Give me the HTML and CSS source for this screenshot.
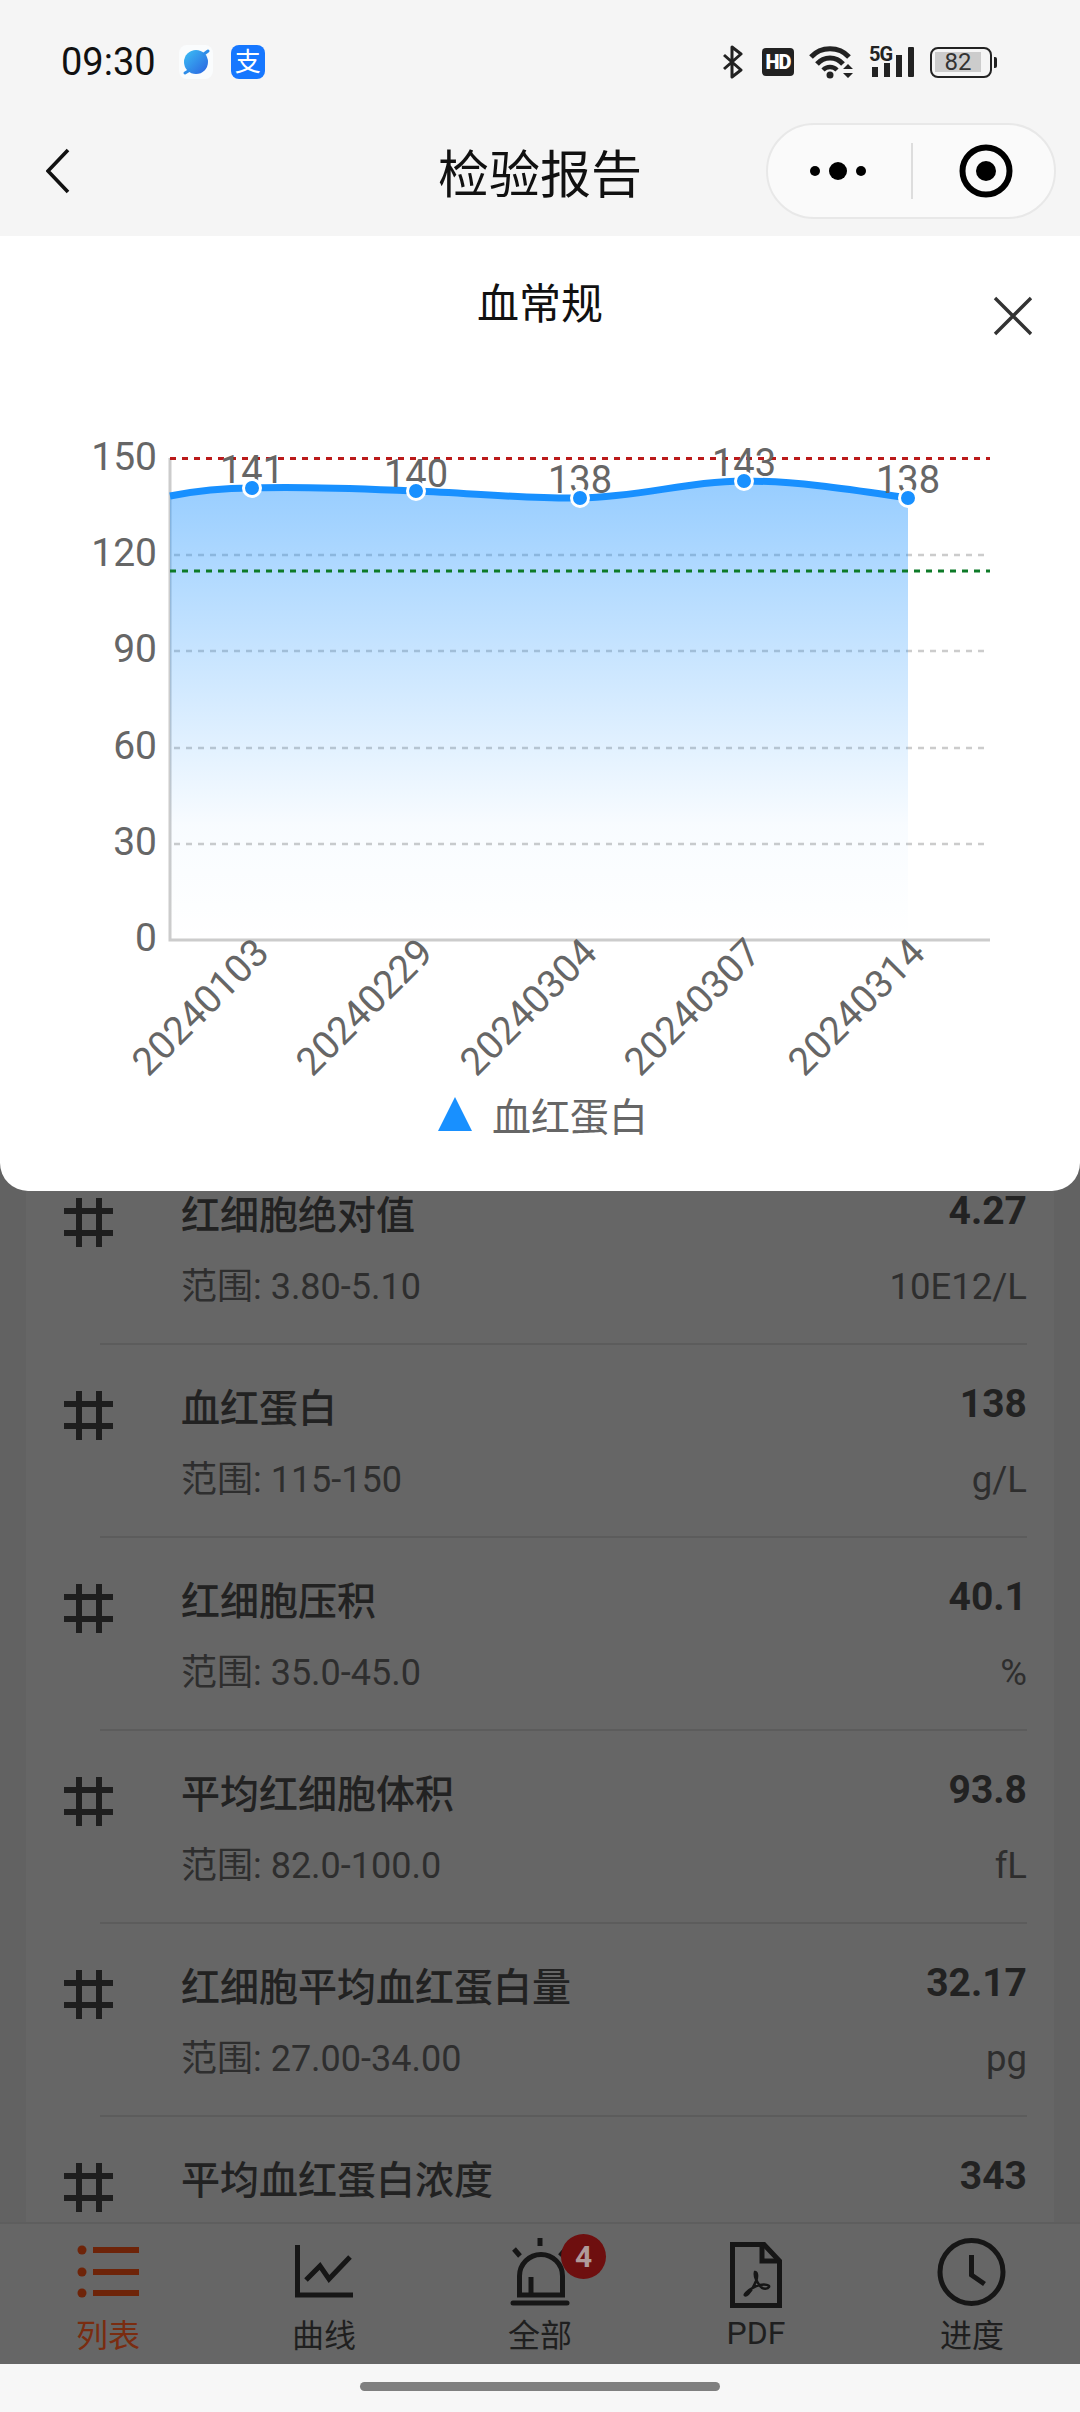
FILE: index.html
```html
<!DOCTYPE html>
<html lang="zh-Hans">
<head>
  <meta charset="UTF-8">
  <title>检验报告</title>
  <meta name="viewport" content="width=device-width, initial-scale=1.0">
  <link rel="stylesheet" href="styles.css">
</head>
<body>
  <div class="page">
    <header class="top">
      <div class="status">
        <span class="time">09:30</span>
        <svg class="app-icon planet" viewBox="0 0 34 34">
          <defs>
            <linearGradient id="ball" x1="0" y1="0" x2="1" y2="1">
              <stop offset="0" stop-color="#3cc0f5"/>
              <stop offset="1" stop-color="#2a62e0"/>
            </linearGradient>
          </defs>
          <circle cx="17" cy="17" r="12" fill="url(#ball)"/>
          <path d="M6 28l5-3 M25 9l4-3" stroke="#2f8de8" stroke-width="3" stroke-linecap="round"/>
        </svg>
        <span class="app-icon alipay">支</span>
        <div class="status-right">
          <svg class="s-bt" viewBox="0 0 25 34">
            <path d="M2 10l17 15-9 7V2l9 7L2 24" fill="none" stroke="#222" stroke-width="3" stroke-linejoin="round"/>
          </svg>
          <span class="s-hd">HD</span>
          <svg class="s-wifi" viewBox="0 0 45 34">
            <path d="M2 12C12 1 30 1 40 12" fill="none" stroke="#222" stroke-width="5"/>
            <path d="M8 19C15 11 27 11 34 19" fill="none" stroke="#222" stroke-width="5"/>
            <path d="M14 25C18 21 24 21 28 25" fill="none" stroke="#222" stroke-width="4.5"/>
            <circle cx="21" cy="30" r="3.5" fill="#222"/>
            <path d="M39 19l5 5H34z M34 28h10l-5 5z" fill="#222"/>
          </svg>
          <svg class="s-signal" viewBox="0 0 46 34">
            <text x="0" y="16" class="s-5g">5G</text>
            <rect x="3" y="22" width="6" height="10" fill="#222"/>
            <rect x="15" y="18" width="6" height="14" fill="#222"/>
            <rect x="27" y="10" width="6" height="22" fill="#222"/>
            <rect x="39" y="2" width="6" height="30" rx="1" fill="#222"/>
          </svg>
          <div class="s-batt">
            <div class="batt-box"><span class="batt-level">82</span></div>
            <span class="batt-nub"></span>
          </div>
        </div>
      </div>
      <nav class="nav">
        <svg class="back" viewBox="0 0 24 46">
          <path d="M22 2L2 23l20 21" fill="none" stroke="#111" stroke-width="3.6"/>
        </svg>
        <h1 class="nav-title">检验报告</h1>
        <div class="capsule">
          <svg class="cap-dots" viewBox="0 0 56 20">
            <circle cx="5" cy="10" r="5" fill="#000"/>
            <circle cx="28" cy="10" r="9" fill="#000"/>
            <circle cx="51" cy="10" r="5" fill="#000"/>
          </svg>
          <span class="cap-line"></span>
          <svg class="cap-target" viewBox="0 0 54 54">
            <circle cx="27" cy="27" r="23.5" fill="none" stroke="#000" stroke-width="6"/>
            <circle cx="27" cy="27" r="10" fill="#000"/>
          </svg>
        </div>
      </nav>
    </header>

    <main class="content">
      <ul class="list">
        <li class="row">
          <svg class="hash" viewBox="0 0 49 49"><path d="M15 0v49M35 0v49M0 13h49M0 35h49"/></svg>
          <div class="row-left"><div class="row-name">红细胞绝对值</div><div class="row-range">范围: 3.80-5.10</div></div>
          <div class="row-right"><div class="row-val">4.27</div><div class="row-unit">10E12/L</div></div>
        </li>
        <li class="row">
          <svg class="hash" viewBox="0 0 49 49"><path d="M15 0v49M35 0v49M0 13h49M0 35h49"/></svg>
          <div class="row-left"><div class="row-name">血红蛋白</div><div class="row-range">范围: 115-150</div></div>
          <div class="row-right"><div class="row-val">138</div><div class="row-unit">g/L</div></div>
        </li>
        <li class="row">
          <svg class="hash" viewBox="0 0 49 49"><path d="M15 0v49M35 0v49M0 13h49M0 35h49"/></svg>
          <div class="row-left"><div class="row-name">红细胞压积</div><div class="row-range">范围: 35.0-45.0</div></div>
          <div class="row-right"><div class="row-val">40.1</div><div class="row-unit">%</div></div>
        </li>
        <li class="row">
          <svg class="hash" viewBox="0 0 49 49"><path d="M15 0v49M35 0v49M0 13h49M0 35h49"/></svg>
          <div class="row-left"><div class="row-name">平均红细胞体积</div><div class="row-range">范围: 82.0-100.0</div></div>
          <div class="row-right"><div class="row-val">93.8</div><div class="row-unit">fL</div></div>
        </li>
        <li class="row">
          <svg class="hash" viewBox="0 0 49 49"><path d="M15 0v49M35 0v49M0 13h49M0 35h49"/></svg>
          <div class="row-left"><div class="row-name">红细胞平均血红蛋白量</div><div class="row-range">范围: 27.00-34.00</div></div>
          <div class="row-right"><div class="row-val">32.17</div><div class="row-unit">pg</div></div>
        </li>
        <li class="row">
          <svg class="hash" viewBox="0 0 49 49"><path d="M15 0v49M35 0v49M0 13h49M0 35h49"/></svg>
          <div class="row-left"><div class="row-name">平均血红蛋白浓度</div></div>
          <div class="row-right"><div class="row-val">343</div></div>
        </li>
      </ul>
    </main>

    <footer class="tabs">
      <div class="tab active">
        <svg class="tab-icon" viewBox="0 0 72 72">
          <g fill="#6e2409">
            <circle cx="10" cy="14" r="4.5"/><circle cx="10" cy="36" r="4.5"/><circle cx="10" cy="57" r="4.5"/>
            <rect x="21" y="11" width="46" height="6"/><rect x="21" y="33" width="46" height="6"/><rect x="21" y="54" width="46" height="6"/>
          </g>
        </svg>
        <span class="tab-text">列表</span>
      </div>
      <div class="tab">
        <svg class="tab-icon" viewBox="0 0 72 72">
          <path class="ico" d="M9.5 9v50H65"/>
          <path class="ico" d="M18 44l14-14 9 13 21-22"/>
        </svg>
        <span class="tab-text">曲线</span>
      </div>
      <div class="tab">
        <svg class="tab-icon" viewBox="0 0 72 72">
          <path class="ico" d="M15.5 59V40a21.5 21.5 0 0 1 43 0v19z"/>
          <path class="ico" d="M27 59V41"/>
          <path class="ico ico-round" d="M9 67h54"/>
          <path class="ico" d="M36 2v8M10 13l6 7M62 13l-6 7"/>
        </svg>
        <span class="tab-text">全部</span>
        <span class="badge">4</span>
      </div>
      <div class="tab">
        <svg class="tab-icon" viewBox="0 0 72 72">
          <path class="ico" d="M12.5 8.5H44L59.5 25v44.5H12.5z"/>
          <path class="ico" d="M42 8.5V25h17.5"/>
          <path class="ico-thin" d="M35 36c-1 4 2 10 5 14s8 3 9 1-4-3-9-2-11 5-14 8 0 3 2 1 6-8 8-13 1-9-1-9z"/>
        </svg>
        <span class="tab-text tab-latin">PDF</span>
      </div>
      <div class="tab">
        <svg class="tab-icon" viewBox="0 0 72 72">
          <circle class="ico" cx="35.5" cy="36" r="31.5"/>
          <path class="ico" d="M35.5 19v20l13 9"/>
        </svg>
        <span class="tab-text">进度</span>
      </div>
    </footer>

    <div class="home"><span class="home-bar"></span></div>

    <!-- 弹窗盖在列表上面 -->
    <section class="modal">
      <h2 class="modal-title">血常规</h2>
      <svg class="modal-close" viewBox="0 0 40 40">
        <path d="M2 2l36 36M38 2L2 38" stroke="#333" stroke-width="3.4" fill="none"/>
      </svg>
      <svg class="chart" viewBox="0 236 1080 955">
        <defs>
          <linearGradient id="area" x1="0" y1="0" x2="0" y2="1">
            <stop offset="0" stop-color="#1890ff" stop-opacity="0.45"/>
            <stop offset="0.75" stop-color="#1890ff" stop-opacity="0.03"/>
            <stop offset="1" stop-color="#1890ff" stop-opacity="0"/>
          </linearGradient>
        </defs>
        <g class="grid">
          <path d="M174 555H984M174 651H984M174 748H984M174 844H984"/>
        </g>
        <path class="axis" d="M170 458V940H990"/>
        <path d="M170 496C195 491 225 488 252 488C305 486 365 489 416 491C470 493 530 499 580 498C640 497 690 481 744 481C800 481 860 491 908 498V940H170Z" fill="url(#area)"/>
        <path class="limit limit-high" d="M170 458.5H990"/>
        <path class="limit limit-low" d="M170 571H990"/>
        <path class="curve" d="M170 496C195 491 225 488 252 488C305 486 365 489 416 491C470 493 530 499 580 498C640 497 690 481 744 481C800 481 860 491 908 498"/>

        <g class="y-labels">
          <text x="157" y="470">150</text>
          <text x="157" y="566">120</text>
          <text x="157" y="662">90</text>
          <text x="157" y="759">60</text>
          <text x="157" y="855">30</text>
          <text x="157" y="951">0</text>
        </g>

        <g class="values">
          <text x="252" y="483">141</text>
          <text x="416" y="487">140</text>
          <text x="580" y="493">138</text>
          <text x="744" y="476">143</text>
          <text x="908" y="493">138</text>
        </g>

        <g class="dots">
          <circle cx="252" cy="488" r="8.5"/>
          <circle cx="416" cy="491" r="8.5"/>
          <circle cx="580" cy="498" r="8.5"/>
          <circle cx="744" cy="481" r="8.5"/>
          <circle cx="908" cy="498" r="8.5"/>
        </g>

        <g class="x-labels">
          <text transform="translate(271 955) rotate(-45)">20240103</text>
          <text transform="translate(435 955) rotate(-45)">20240229</text>
          <text transform="translate(599 955) rotate(-45)">20240304</text>
          <text transform="translate(763 955) rotate(-45)">20240307</text>
          <text transform="translate(927 955) rotate(-45)">20240314</text>
        </g>

        <path d="M455 1097L472 1131H438Z" fill="#1890ff"/>
        <text class="legend" x="492" y="1131">血红蛋白</text>
      </svg>
    </section>
  </div>
</body>
</html>
```

FILE: styles.css
```css
* {
  box-sizing: border-box;
}

html, body {
  margin: 0;
  padding: 0;
}

body {
  font-family: Roboto, "Noto Sans CJK SC", sans-serif;
  background: #f7f7f7;
  color: #222;
}

.page {
  position: relative;
  width: 1080px;
  height: 2412px;
  display: flex;
  flex-direction: column;
  overflow: hidden;
}

/* status bar + nav */
.top {
  height: 236px;
  flex: none;
  background: #f5f5f5;
}

.status {
  height: 108px;
  padding: 16px 83px 0 61px;
  display: flex;
  align-items: center;
}

.time {
  font-size: 38px;
  color: #111;
  margin-right: 23px;
}

.app-icon {
  width: 34px;
  height: 34px;
  border-radius: 8px;
  flex: none;
}

.planet {
  background: #fafcfd;
  margin-right: 18px;
}

.alipay {
  background: #1677ff;
  color: #fff;
  font-size: 26px;
  line-height: 34px;
  text-align: center;
}

.status-right {
  margin-left: auto;
  display: flex;
  align-items: center;
  gap: 15px;
}

.s-bt {
  width: 25px;
  height: 34px;
}

.s-hd {
  width: 32px;
  height: 28px;
  border-radius: 4px;
  background: #222;
  color: #fff;
  font-size: 20px;
  font-weight: 900;
  line-height: 28px;
  text-align: center;
  letter-spacing: -1px;
}

.s-wifi {
  width: 45px;
  height: 34px;
}

.s-signal {
  width: 46px;
  height: 34px;
  overflow: visible;
}

.s-5g {
  font-size: 20px;
  font-weight: 700;
  fill: #222;
  letter-spacing: -1px;
}

.s-batt {
  display: flex;
  align-items: center;
  gap: 2px;
}

.batt-box {
  width: 62px;
  height: 31px;
  border: 2.5px solid #222;
  border-radius: 8px;
  padding: 3px;
}

.batt-level {
  display: block;
  width: 46px;
  height: 20px;
  background: #ccc;
  color: #333;
  font-size: 24px;
  line-height: 20px;
  text-align: center;
}

.batt-nub {
  width: 3px;
  height: 11px;
  background: #222;
  border-radius: 0 2px 2px 0;
}

.nav {
  height: 128px;
  position: relative;
  display: flex;
  align-items: center;
  justify-content: space-between;
  padding: 0 24px 2px 46px;
}

.back {
  width: 24px;
  height: 46px;
}

.nav-title {
  position: absolute;
  left: 0;
  right: 0;
  margin: 0;
  text-align: center;
  font-size: 51px;
  font-weight: 400;
  color: #111;
}

.capsule {
  width: 290px;
  height: 96px;
  border: 2px solid #e8e8e8;
  border-radius: 48px;
  background: #fafafa;
  display: flex;
  align-items: center;
  padding-left: 42px;
}

.cap-dots {
  width: 56px;
  height: 20px;
}

.cap-line {
  width: 2px;
  height: 56px;
  background: #ddd;
  margin-left: 45px;
}

.cap-target {
  width: 54px;
  height: 54px;
  margin-left: 46px;
}

/* list behind the dim */
.content {
  flex: 1;
  min-height: 0;
  overflow: hidden;
  background: #626262;
  padding: 0 26px;
}

.list {
  list-style: none;
  margin: 0;
  padding: 916px 0 0;
  background: #666;
}

.row {
  height: 193px;
  margin: 0 27px 0 74px;
  border-bottom: 2px solid #5c5c5c;
  display: flex;
  padding-top: 41px;
}

.hash {
  width: 49px;
  height: 49px;
  margin: 5px 0 0 -36px;
  flex: none;
}

.hash path {
  fill: none;
  stroke: #1e1e1e;
  stroke-width: 6;
}

.row-left {
  margin-left: 68px;
  flex: 1;
}

.row-name {
  font-size: 39px;
  line-height: 46px;
  color: #222;
  font-weight: 500;
}

.row-range {
  font-size: 36px;
  line-height: 46px;
  margin-top: 25px;
  color: #2e2e2e;
}

.row-right {
  text-align: right;
}

.row-val {
  font-size: 39px;
  line-height: 46px;
  margin-top: -5px;
  font-weight: 700;
  color: #222;
}

.row-unit {
  font-size: 36.5px;
  line-height: 46px;
  margin-top: 30px;
  color: #2e2e2e;
}

/* bottom tabs */
.tabs {
  height: 142px;
  flex: none;
  background: #666;
  border-top: 2px solid #5e5e5e;
  display: grid;
  grid-template-columns: repeat(5, 1fr);
}

.tab {
  position: relative;
  display: flex;
  flex-direction: column;
  align-items: center;
  padding-top: 12px;
}

.tab-icon {
  width: 72px;
  height: 72px;
  flex: none;
}

.ico {
  fill: none;
  stroke: #161616;
  stroke-width: 5;
}

.ico-round {
  stroke-linecap: round;
}

.ico-thin {
  fill: none;
  stroke: #161616;
  stroke-width: 2.5;
}

.tab-text {
  font-size: 32px;
  line-height: 40px;
  margin-top: 8px;
  color: #1f1f1f;
}

.tab-latin {
  margin-top: 5px;
}

.tab.active .tab-text {
  color: #7a2c10;
}

.badge {
  position: absolute;
  left: 129px;
  top: 10px;
  width: 45px;
  height: 45px;
  border-radius: 50%;
  background: #6e0f0f;
  color: #b09a9a;
  font-size: 30px;
  font-weight: 700;
  line-height: 45px;
  text-align: center;
}

.home {
  height: 48px;
  flex: none;
  background: #f7f7f7;
  display: flex;
  justify-content: center;
  padding-top: 18px;
}

.home-bar {
  width: 360px;
  height: 9px;
  border-radius: 5px;
  background: #7f7f7f;
}

/* chart popup */
.modal {
  position: absolute;
  left: 0;
  top: 236px;
  width: 1080px;
  height: 955px;
  background: #fff;
  border-radius: 0 0 28px 28px;
}

.modal-title {
  margin: 0;
  padding-top: 42px;
  text-align: center;
  font-size: 42px;
  line-height: 54px;
  font-weight: 400;
  color: #111;
}

.modal-close {
  position: absolute;
  left: 993px;
  top: 60px;
  width: 40px;
  height: 40px;
}

.chart {
  position: absolute;
  left: 0;
  top: 0;
  width: 1080px;
  height: 955px;
}

.grid path {
  fill: none;
  stroke: #ccc;
  stroke-width: 2.5;
  stroke-dasharray: 6 6;
}

.axis {
  fill: none;
  stroke: #ccc;
  stroke-width: 3;
}

.limit {
  fill: none;
  stroke-width: 3;
  stroke-dasharray: 6 6;
}

.limit-high {
  stroke: #bb1a1a;
}

.limit-low {
  stroke: #0d7a28;
}

.curve {
  fill: none;
  stroke: #1890ff;
  stroke-width: 7;
}

.dots circle {
  fill: #1890ff;
  stroke: #fff;
  stroke-width: 3;
}

.y-labels text {
  font-size: 39px;
  fill: #666;
  text-anchor: end;
}

.values text {
  font-size: 38px;
  fill: #666;
  text-anchor: middle;
}

.x-labels text {
  font-size: 38.6px;
  fill: #666;
  text-anchor: end;
}

.legend {
  font-size: 39px;
  fill: #666;
}
```
